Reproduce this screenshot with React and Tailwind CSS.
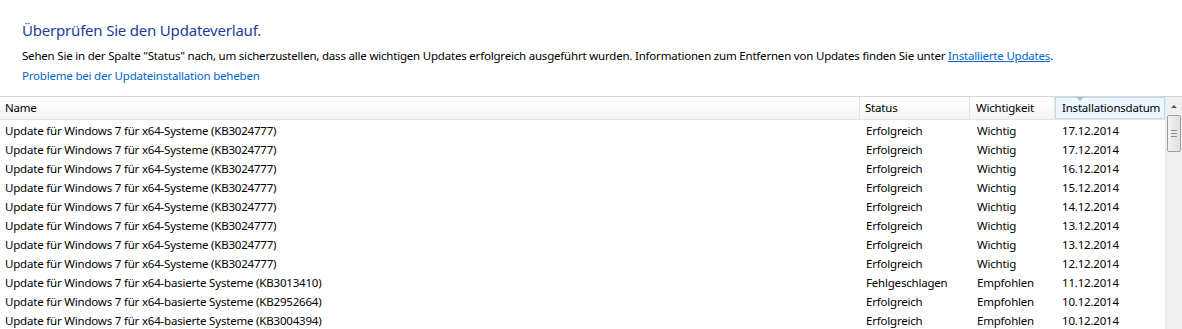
const rows = [
  ['Update für Windows 7 für x64-Systeme (KB3024777)', 'Erfolgreich', 'Wichtig', '17.12.2014'],
  ['Update für Windows 7 für x64-Systeme (KB3024777)', 'Erfolgreich', 'Wichtig', '17.12.2014'],
  ['Update für Windows 7 für x64-Systeme (KB3024777)', 'Erfolgreich', 'Wichtig', '16.12.2014'],
  ['Update für Windows 7 für x64-Systeme (KB3024777)', 'Erfolgreich', 'Wichtig', '15.12.2014'],
  ['Update für Windows 7 für x64-Systeme (KB3024777)', 'Erfolgreich', 'Wichtig', '14.12.2014'],
  ['Update für Windows 7 für x64-Systeme (KB3024777)', 'Erfolgreich', 'Wichtig', '13.12.2014'],
  ['Update für Windows 7 für x64-Systeme (KB3024777)', 'Erfolgreich', 'Wichtig', '13.12.2014'],
  ['Update für Windows 7 für x64-Systeme (KB3024777)', 'Erfolgreich', 'Wichtig', '12.12.2014'],
  ['Update für Windows 7 für x64-basierte Systeme (KB3013410)', 'Fehlgeschlagen', 'Empfohlen', '11.12.2014'],
  ['Update für Windows 7 für x64-basierte Systeme (KB2952664)', 'Erfolgreich', 'Empfohlen', '10.12.2014'],
  ['Update für Windows 7 für x64-basierte Systeme (KB3004394)', 'Erfolgreich', 'Empfohlen', '10.12.2014'],
];

export default function App() {
  return (
    <div className="w-[1182px] h-[329px] overflow-hidden bg-white text-[11.5px] tracking-[-0.2px] text-black font-['Noto_Sans',sans-serif]">
      <div className="pl-[22px] pt-[20px]">
        <h1 className="text-[15px] leading-[20px] text-[#1e3c96]">Überprüfen Sie den Updateverlauf.</h1>
        <p className="mt-[8px] leading-[16px]">
          Sehen Sie in der Spalte "Status" nach, um sicherzustellen, dass alle wichtigen Updates erfolgreich ausgeführt wurden. Informationen zum Entfernen von Updates finden Sie unter{' '}
          <span className="text-[#0066cc] underline">Installierte Updates</span>.
        </p>
        <p className="mt-[4px] leading-[16px] text-[#0066cc]">Probleme bei der Updateinstallation beheben</p>
      </div>

      <div className="mt-[12px] flex border-t border-[#d5d5d5]">
        <div className="flex-1">
          <div className="flex h-[23px] items-center bg-gradient-to-b from-white to-[#f3f4f6] border-b border-[#e5e5e5]">
            <div className="w-[860px] h-full flex items-center pl-[5px] border-r border-[#e3e3e3]">Name</div>
            <div className="w-[110px] h-full flex items-center pl-[5px] border-r border-[#e3e3e3]">Status</div>
            <div className="w-[85px] h-full flex items-center pl-[6px] border-r border-[#e3e3e3]">Wichtigkeit</div>
            <div className="relative flex-1 h-full flex items-center pl-[6px] bg-[#ebf6fd] border border-[#c0dcf0]">
              Installationsdatum
              <span className="absolute top-[-1px] left-[20px] w-0 h-0 border-l-[4px] border-r-[4px] border-t-[4px] border-l-transparent border-r-transparent border-t-[#a8c0d6]" />
            </div>
          </div>
          <div className="pt-[1px]">
            {rows.map((r, i) => (
              <div key={i} className="flex h-[19px] items-center">
                <div className="w-[860px] pl-[5px] whitespace-nowrap">{r[0]}</div>
                <div className="w-[110px] pl-[6px]">{r[1]}</div>
                <div className="w-[85px] pl-[7px]">{r[2]}</div>
                <div className="flex-1 pl-[7px]">{r[3]}</div>
              </div>
            ))}
          </div>
        </div>
        <div className="w-[17px] flex flex-col bg-[#f0f0f0] border-l border-[#e8e8e8]">
          <div className="h-[18px] flex items-center justify-center">
            <span className="w-0 h-0 border-l-[3px] border-r-[3px] border-b-[3px] border-l-transparent border-r-transparent border-b-[#555]" />
          </div>
          <div className="mx-[1px] h-[37px] rounded-[2px] border border-[#9e9e9e] bg-gradient-to-r from-[#f2f2f2] to-[#e0e0e0] flex flex-col items-center justify-center gap-[2px]">
            <span className="w-[6px] h-px bg-[#8a8a8a]" />
            <span className="w-[6px] h-px bg-[#8a8a8a]" />
            <span className="w-[6px] h-px bg-[#8a8a8a]" />
          </div>
        </div>
      </div>
    </div>
  );
}
